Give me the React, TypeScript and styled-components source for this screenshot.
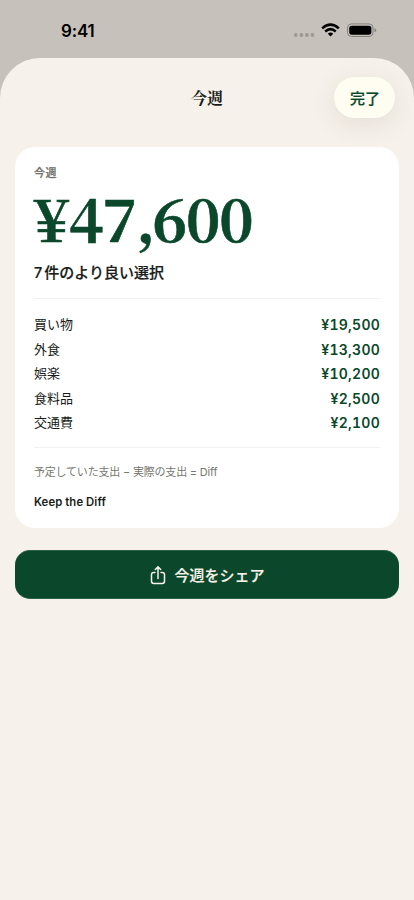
import React from "react";
import styled, { createGlobalStyle } from "styled-components";

const green = "#0b482b";
const ink = "#191c19";

const GlobalStyle = createGlobalStyle`
  * { box-sizing: border-box; }
  body {
    margin: 0;
    background: #c6c1bb;
    font-family: Inter, "Noto Sans CJK JP", sans-serif;
    color: ${ink};
  }
`;

const Screen = styled.main`
  height: 900px;
  overflow: hidden;
  display: flex;
  flex-direction: column;
  background: #c6c1bb;
`;

const StatusBar = styled.div`
  height: 58px;
  flex: none;
  display: flex;
  justify-content: space-between;
  padding: 21px 37px 0 61px;
`;

const Clock = styled.time`
  font-size: 17px;
  font-weight: 600;
  line-height: 20px;
  letter-spacing: -0.2px;
  color: #000;
`;

const StatusIcons = styled.svg`
  display: block;
  width: 84px;
  height: 20px;
`;

const Sheet = styled.section`
  flex: 1;
  background: #f6f1ea;
  border-radius: 40px 40px 0 0;
  padding: 0 15px;
  display: flex;
  flex-direction: column;
`;

const Header = styled.header`
  height: 89px;
  display: grid;
  grid-template-columns: 1fr auto 1fr;
  align-items: start;
  padding: 19px 4px 0 0;
`;

const Title = styled.h1`
  grid-column: 2;
  margin: 0 0 0 4px;
  font: 700 16px/41px "Noto Serif CJK JP", "Noto Sans CJK JP", serif;
`;

const DoneButton = styled.button`
  justify-self: end;
  width: 61px;
  height: 41px;
  padding: 2px 0 0 1px;
  border: 0;
  border-radius: 21px;
  background: #fffdf1;
  box-shadow: 0 6px 26px rgba(70, 60, 35, 0.1);
  color: ${green};
  font: 500 15px/39px Inter, "Noto Sans CJK JP", sans-serif;
  -webkit-text-stroke: 0.2px;
`;

const Card = styled.article`
  height: 381px;
  padding: 18px 19px 0;
  border-radius: 20px;
  background: #fff;
`;

const Period = styled.div`
  font-size: 11px;
  line-height: 16px;
  font-weight: 500;
  letter-spacing: 0.5px;
  -webkit-text-stroke: 0.25px;
  color: #71716a;
`;

const Amount = styled.div`
  height: 76px;
  font: 700 59px/72px "Noto Serif CJK JP", serif;
  letter-spacing: -1.4px;
  -webkit-text-stroke: 0.6px;
  color: ${green};
  white-space: nowrap;
`;

const Currency = styled.span`
  letter-spacing: 0.2px;
`;

const Separator = styled.span`
  letter-spacing: -3px;
`;

const Choices = styled.div`
  margin-top: 6px;
  font-size: 15px;
  line-height: 20px;
  font-weight: 500;
  -webkit-text-stroke: 0.2px;
`;

const Count = styled.span`
  font-size: 14.5px;
  margin-right: 2px;
`;

const Categories = styled.ul`
  list-style: none;
  margin: 15px 0 0;
  padding: 13px 0 12px;
  height: 150px;
  border: solid #f2f2f1;
  border-width: 1px 0;
`;

const Category = styled.li`
  display: flex;
  justify-content: space-between;
  height: 24.5px;
  line-height: 24.5px;
  font-size: 13px;
`;

const Value = styled.span`
  font-size: 14px;
  line-height: 25.2px;
  font-weight: 600;
  letter-spacing: 0.25px;
  font-variant-numeric: tabular-nums;
  color: ${green};
`;

const Formula = styled.p`
  margin: 16px 0 0;
  font-size: 11px;
  line-height: 16px;
  letter-spacing: -0.2px;
  color: #77776f;
`;

const Brand = styled.div`
  margin-top: 14px;
  font-size: 11.3px;
  line-height: 17px;
  font-weight: 600;
  letter-spacing: 0.1px;
`;

const ShareButton = styled.button`
  margin-top: 22px;
  height: 49px;
  padding: 2px 0 0 1px;
  border: 1px solid #2d6146;
  border-width: 1px 0;
  border-radius: 15px;
  background: ${green};
  color: #f8f3e9;
  font: 500 15px/20px Inter, "Noto Sans CJK JP", sans-serif;
  -webkit-text-stroke: 0.2px;
  display: flex;
  align-items: center;
  justify-content: center;
  gap: 8px;
`;

const categories = [
  ["買い物", "¥19,500"],
  ["外食", "¥13,300"],
  ["娯楽", "¥10,200"],
  ["食料品", "¥2,500"],
  ["交通費", "¥2,100"],
];

function StatusGlyphs() {
  return (
    <StatusIcons viewBox="0 0 84 20">
      <g fill="#9d9995">
        <circle cx="2.7" cy="14" r="1.9" />
        <circle cx="8.4" cy="14" r="1.9" />
        <circle cx="13.9" cy="14" r="1.9" />
        <circle cx="19.4" cy="14" r="1.9" />
      </g>
      <g fill="none" stroke="#000" strokeWidth="2.5">
        <path d="M29.2 7.4Q37.5-.2 45.8 7.4" />
        <path d="M32.2 10.5Q37.5 5.7 42.8 10.5" />
      </g>
      <path d="M34.8 12.7Q37.5 10.4 40.2 12.7L37.5 15.6Z" />
      <rect x="54.5" y="2.9" width="25.6" height="12.6" rx="4" fill="none" stroke="#85817d" />
      <rect x="56.2" y="4.7" width="22.2" height="9" rx="2.6" />
      <path d="M81.5 7.2Q83.2 7.7 83.2 9.2T81.5 11.2Z" fill="#85817d" />
    </StatusIcons>
  );
}

function ShareIcon() {
  return (
    <svg width="16" height="20" viewBox="0 0 16 20" fill="none" stroke="currentColor" strokeWidth="1.5" strokeLinecap="round" strokeLinejoin="round">
      <path d="M5 6.4H3.7Q1.5 6.4 1.5 8.6V15.3Q1.5 17.5 3.7 17.5H12.3Q14.5 17.5 14.5 15.3V8.6Q14.5 6.4 12.3 6.4H11M8 12.6V1M5.3 3.5 8 .9 10.7 3.5" />
    </svg>
  );
}

export default function App() {
  return (
    <Screen>
      <GlobalStyle />
      <StatusBar>
        <Clock>9:41</Clock>
        <StatusGlyphs />
      </StatusBar>
      <Sheet>
        <Header>
          <Title>今週</Title>
          <DoneButton>完了</DoneButton>
        </Header>
        <Card>
          <Period>今週</Period>
          <Amount><Currency>¥</Currency>47<Separator>,</Separator>600</Amount>
          <Choices><Count>7</Count>件のより良い選択</Choices>
          <Categories>
            {categories.map(([name, value]) => (
              <Category key={name}>
                <span>{name}</span>
                <Value>{value}</Value>
              </Category>
            ))}
          </Categories>
          <Formula>予定していた支出 − 実際の支出 = Diff</Formula>
          <Brand>Keep the Diff</Brand>
        </Card>
        <ShareButton>
          <ShareIcon />
          今週をシェア
        </ShareButton>
      </Sheet>
    </Screen>
  );
}
